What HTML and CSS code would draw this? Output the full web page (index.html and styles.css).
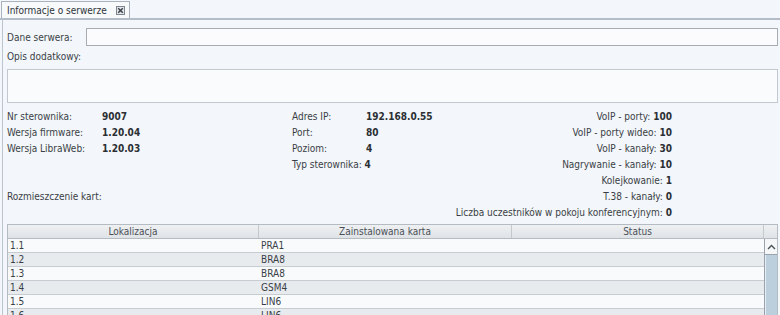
FILE: index.html
```html
<!DOCTYPE html>
<html>
    <head>
        <title>Informacje o serwerze</title>
        <link rel="stylesheet" href="styles.css">
    </head>
    <body>
        <div class="tabbar">
            <div class="tab">
                Informacje o serwerze
                <span class="tab-close">
                    <svg width="9" height="9" viewBox="0 0 9 9">
                        <rect x="0.5" y="0.5" width="8" height="8" fill="#e4e7ea" stroke="#7d8690"/>
                        <path d="M2.2 2.2 L6.8 6.8 M6.8 2.2 L2.2 6.8" stroke="#3a4048" stroke-width="1.5"/>
                    </svg>
                </span>
            </div>
        </div>

        <div class="panel">
            <div class="form-row">
                <label>Dane serwera:</label>
                <input type="text" class="field">
            </div>
            <div class="form-label">Opis dodatkowy:</div>
            <textarea class="area"></textarea>

            <div class="info">
                <div class="info-col first">
                    <div class="line"><span class="key">Nr sterownika:</span><b>9007</b></div>
                    <div class="line"><span class="key">Wersja firmware:</span><b>1.20.04</b></div>
                    <div class="line"><span class="key">Wersja LibraWeb:</span><b>1.20.03</b></div>
                    <div class="line"></div>
                    <div class="line"></div>
                    <div class="line">Rozmieszczenie kart:</div>
                </div>
                <div class="info-col second">
                    <div class="line"><span class="key">Adres IP:</span><b>192.168.0.55</b></div>
                    <div class="line"><span class="key">Port:</span><b>80</b></div>
                    <div class="line"><span class="key">Poziom:</span><b>4</b></div>
                    <div class="line">Typ sterownika: <b>4</b></div>
                </div>
                <div class="info-col third">
                    <div class="line">VoIP - porty: <b>100</b></div>
                    <div class="line">VoIP - porty wideo: <b>10</b></div>
                    <div class="line">VoIP - kanały: <b>30</b></div>
                    <div class="line">Nagrywanie - kanały: <b>10</b></div>
                    <div class="line">Kolejkowanie: <b>1</b></div>
                    <div class="line">T.38 - kanały: <b>0</b></div>
                    <div class="line">Liczba uczestników w pokoju konferencyjnym: <b>0</b></div>
                </div>
            </div>

            <div class="grid">
                <div class="grid-head">
                    <div class="cell">Lokalizacja</div>
                    <div class="cell">Zainstalowana karta</div>
                    <div class="cell">Status</div>
                    <div class="cell spacer"></div>
                </div>
                <div class="grid-body">
                    <div class="rows">
                        <div class="row"><div class="cell">1.1</div><div class="cell">PRA1</div><div class="cell"></div></div>
                        <div class="row alt"><div class="cell">1.2</div><div class="cell">BRA8</div><div class="cell"></div></div>
                        <div class="row"><div class="cell">1.3</div><div class="cell">BRA8</div><div class="cell"></div></div>
                        <div class="row alt"><div class="cell">1.4</div><div class="cell">GSM4</div><div class="cell"></div></div>
                        <div class="row"><div class="cell">1.5</div><div class="cell">LIN6</div><div class="cell"></div></div>
                        <div class="row alt"><div class="cell">1.6</div><div class="cell">LIN6</div><div class="cell"></div></div>
                    </div>
                    <div class="scrollbar">
                        <div class="scroll-up">
                            <svg width="9" height="6" viewBox="0 0 9 6">
                                <path d="M1 5 L4.5 1.5 L8 5" fill="none" stroke="#4a5058" stroke-width="1.4"/>
                            </svg>
                        </div>
                        <div class="scroll-thumb"></div>
                    </div>
                </div>
            </div>
        </div>
    </body>
</html>
```

FILE: styles.css
```css
body {
    margin: 0;
    height: 315px;
    overflow: hidden;
    background: #f3f6fa;
    color: #3a3f46;
    font-family: "DejaVu Sans Condensed", "DejaVu Sans", sans-serif;
    font-size: 10px;
}
.tabbar {
    height: 20px;
    padding-top: 3px;
    padding-left: 1px;
    box-sizing: border-box;
    border-bottom: 2px solid #b3bcc7;
    display: flex;
    align-items: flex-end;
}
.tab {
    height: 17px;
    box-sizing: border-box;
    padding: 0 4px 0 5px;
    border: 1px solid #a9b2bd;
    border-bottom: none;
    background: #f7f9fb;
    display: flex;
    align-items: center;
    gap: 9px;
    color: #2f343a;
}
.tab-close {
    display: flex;
}
.tab-close svg {
    display: block;
}
.panel {
    border-left: 1px solid #bcc4cc;
    margin-left: 2px;
    padding: 8px 2px 0 4px;
}
.form-row {
    display: flex;
    align-items: center;
    height: 18px;
}
.form-row label {
    width: 79px;
    flex: none;
}
.field {
    flex: 1;
    height: 18px;
    box-sizing: border-box;
    margin: 0;
    border: 1px solid #a8acb1;
    background: #fbfbfd;
}
.form-label {
    margin-top: 3px;
    height: 16px;
    line-height: 16px;
}
.area {
    display: block;
    width: 100%;
    height: 34px;
    box-sizing: border-box;
    margin: 4px 0 0;
    border: 1px solid #c3c8ce;
    background: #fafbfd;
    resize: none;
}
.info {
    display: flex;
    padding-top: 6px;
    height: 121px;
    box-sizing: border-box;
}
.line {
    height: 16px;
    line-height: 16px;
    white-space: nowrap;
}
.line b {
    color: #2b2f34;
}
.info-col {
    flex: none;
    min-width: 0;
}
.info-col.first {
    width: 285px;
}
.first .key {
    display: inline-block;
    width: 95px;
}
.info-col.second {
    width: 150px;
}
.second .key {
    display: inline-block;
    width: 74px;
}
.info-col.third {
    width: 230px;
    text-align: right;
}
.grid {
    border: 1px solid #b4bbc3;
}
.grid-head {
    display: flex;
    height: 13px;
    background: linear-gradient(#eef0f2, #e0e3e6);
    border-bottom: 1px solid #b4bbc3;
}
.grid-head .cell {
    text-align: center;
    line-height: 13px;
    border-right: 1px solid #c4c9ce;
    color: #4a5058;
}
.grid-head .cell:nth-child(1) { width: 250px; }
.grid-head .cell:nth-child(2) { width: 252px; }
.grid-head .cell:nth-child(3) { width: 251px; }
.grid-head .cell.spacer {
    flex: 1;
    border-right: none;
}
.grid-body {
    display: flex;
    height: 80px;
    overflow: hidden;
}
.rows {
    width: 756px;
    flex: none;
}
.row {
    display: flex;
    height: 13px;
    line-height: 13px;
    background: #f8fafc;
    border-bottom: 1px solid #c7ccd2;
}
.row.alt {
    background: #e8ebee;
}
.row .cell {
    padding-left: 2px;
    box-sizing: border-box;
    color: #3a3f46;
}
.row .cell:nth-child(1) { width: 251px; }
.row .cell:nth-child(2) { width: 253px; }
.row .cell:nth-child(3) { flex: 1; }
.scrollbar {
    flex: 1;
    border-left: 1px solid #9aa3ad;
    background: #eef1f4;
    display: flex;
    flex-direction: column;
}
.scroll-up {
    height: 15px;
    display: flex;
    align-items: center;
    justify-content: center;
    background: #f4f6f8;
    border-bottom: 1px solid #9aa3ad;
}
.scroll-thumb {
    flex: 1;
    background: #bccfdd;
    border-left: 1px solid #e6eef4;
}
```
